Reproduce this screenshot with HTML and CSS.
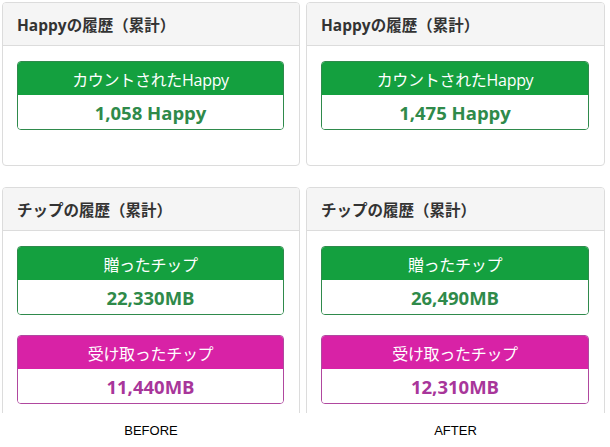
FILE: index.html
```html
<!DOCTYPE html>
<html lang="ja">
<head>
<meta charset="utf-8">
<link rel="stylesheet" href="styles.css">
</head>
<body>
<div class="compare">
  <div class="col">
    <div class="shot">
      <div class="panel">
        <div class="panel-heading">Happyの履歴（累計）</div>
        <div class="panel-body">
          <div class="stat green">
            <div class="stat-head">カウントされたHappy</div>
            <div class="stat-value">1,058 Happy</div>
          </div>
        </div>
      </div>
      <div class="panel">
        <div class="panel-heading">チップの履歴（累計）</div>
        <div class="panel-body">
          <div class="stat green">
            <div class="stat-head">贈ったチップ</div>
            <div class="stat-value">22,330MB</div>
          </div>
          <div class="stat pink">
            <div class="stat-head">受け取ったチップ</div>
            <div class="stat-value">11,440MB</div>
          </div>
        </div>
      </div>
    </div>
    <div class="label">BEFORE</div>
  </div>
  <div class="col">
    <div class="shot">
      <div class="panel">
        <div class="panel-heading">Happyの履歴（累計）</div>
        <div class="panel-body">
          <div class="stat green">
            <div class="stat-head">カウントされたHappy</div>
            <div class="stat-value">1,475 Happy</div>
          </div>
        </div>
      </div>
      <div class="panel">
        <div class="panel-heading">チップの履歴（累計）</div>
        <div class="panel-body">
          <div class="stat green">
            <div class="stat-head">贈ったチップ</div>
            <div class="stat-value">26,490MB</div>
          </div>
          <div class="stat pink">
            <div class="stat-head">受け取ったチップ</div>
            <div class="stat-value">12,310MB</div>
          </div>
        </div>
      </div>
    </div>
    <div class="label">AFTER</div>
  </div>
</div>
</body>
</html>
```
FILE: styles.css
```css
* { box-sizing: border-box; }
html, body { margin: 0; padding: 0; background: #fff; }
body {
  font-family: "Open Sans", "Noto Sans CJK JP", sans-serif;
  color: #333;
}
.compare {
  display: grid;
  grid-template-columns: 298px 299px;
  column-gap: 6px;
  padding: 2px 0 0 2px;
}
.shot {
  height: 411px;
  overflow: hidden;
}
.panel {
  border: 1px solid #dcdcdc;
  border-radius: 4px;
  margin-bottom: 21px;
  background: #fff;
}
.panel-heading {
  height: 43px;
  background: #f5f5f5;
  border-bottom: 1px solid #dcdcdc;
  border-radius: 3px 3px 0 0;
  padding: 0 14px;
  display: flex;
  align-items: center;
  font-size: 15.5px;
  font-weight: 700;
  color: #333;
}
.panel-body {
  padding: 15px 15px 15px 14px;
}
.stat {
  border: 1px solid;
  border-radius: 4px;
  margin-bottom: 20px;
  overflow: hidden;
  text-align: center;
}
.stat-head {
  height: 33px;
  display: flex;
  align-items: center;
  justify-content: center;
  color: #fff;
  font-size: 16px;
  letter-spacing: -0.3px;
}
.stat-value {
  height: 34px;
  display: flex;
  align-items: center;
  justify-content: center;
  font-size: 18.5px;
  font-weight: 700;
  background: #fff;
}
.green { border-color: #2f8a4c; }
.green .stat-head { background: #14a03f; }
.green .stat-value { color: #2f8a4a; }
.pink { border-color: #b0489f; }
.pink .stat-head { background: #d822a6; }
.pink .stat-value { color: #a8369a; }
.label {
  margin-top: 10px;
  text-align: center;
  font-family: "Liberation Sans", Arial, sans-serif;
  font-size: 13px;
  color: #000;
}
```
